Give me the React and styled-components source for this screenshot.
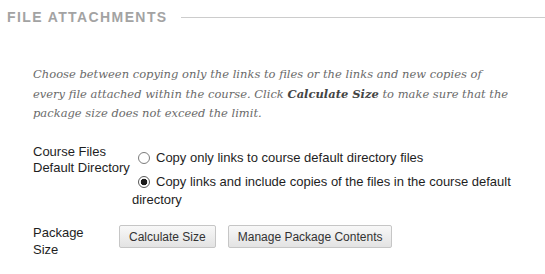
import React from 'react'
import styled, { createGlobalStyle } from 'styled-components'

const GlobalStyle = createGlobalStyle`
  body {
    margin: 0;
    background: #ffffff;
    font-family: "Liberation Sans", Arial, sans-serif;
  }
`

const Page = styled.div`
  width: 545px;
  height: 274px;
  overflow: hidden;
  background: #ffffff;
`

const Header = styled.div`
  display: flex;
  align-items: center;
  padding: 10px 0 0 7px;
  height: 15px;
`

const Title = styled.h2`
  margin: 0;
  font-size: 14px;
  font-weight: bold;
  letter-spacing: 1.4px;
  color: #a3a3a3;
  line-height: 15px;
  white-space: nowrap;
`

const Rule = styled.div`
  flex: 1;
  height: 1px;
  margin-left: 13px;
  background: #cccccc;
`

const Instructions = styled.p`
  margin: 40px 0 0 33px;
  width: 505px;
  font-family: "DejaVu Serif", Georgia, serif;
  font-style: italic;
  font-size: 11.5px;
  line-height: 19.5px;
  color: #6a6a6a;

  b {
    color: #444444;
  }
`

const Row = styled.div`
  display: flex;
  align-items: flex-start;
  margin-top: ${props => props.gap}px;
  padding-left: 33px;
`

const Label = styled.div`
  width: ${props => props.width}px;
  flex-shrink: 0;
  font-size: 13px;
  line-height: 16.5px;
  color: #1e1e1e;
`

const Options = styled.div`
  padding-top: 5px;
  width: 395px;
`

const Option = styled.label`
  display: block;
  font-size: 13px;
  line-height: 17.5px;
  color: #1e1e1e;
  & + & {
    margin-top: 7px;
  }
`

const Radio = styled.input.attrs({ type: 'radio' })`
  appearance: none;
  display: inline-block;
  box-sizing: border-box;
  width: 12px;
  height: 12px;
  margin: 0 6px 0 6px;
  vertical-align: -2px;
  border: 1px solid #7c7c7c;
  border-radius: 50%;
  background: #ffffff;

  &:checked {
    border-color: #5a5a5a;
    background: radial-gradient(circle, #1a1a1a 0 3px, #ffffff 3.6px);
  }
`

const Buttons = styled.div`
  display: flex;
  gap: 12px;
`

const Button = styled.button`
  height: 23px;
  padding: 0 9px;
  font-family: "Liberation Sans", Arial, sans-serif;
  font-size: 12px;
  color: #333333;
  background: linear-gradient(#f8f8f8, #e3e3e3);
  border: 1px solid #c6c6c6;
  border-radius: 2px;
`

const App = () => {
  return (
    <Page>
      <GlobalStyle />
      <Header>
        <Title>FILE ATTACHMENTS</Title>
        <Rule />
      </Header>
      <Instructions>
        Choose between copying only the links to files or the links and new copies of<br />
        every file attached within the course. Click <b>Calculate Size</b> to make sure that the<br />
        package size does not exceed the limit.
      </Instructions>
      <Row gap={20}>
        <Label width={99}>Course Files Default Directory</Label>
        <Options>
          <Option>
            <Radio name="dir" />
            Copy only links to course default directory files
          </Option>
          <Option>
            <Radio name="dir" defaultChecked />
            Copy links and include copies of the files in the course default directory
          </Option>
        </Options>
      </Row>
      <Row gap={17}>
        <Label width={86}>Package<br />Size</Label>
        <Buttons>
          <Button>Calculate Size</Button>
          <Button>Manage Package Contents</Button>
        </Buttons>
      </Row>
    </Page>
  )
}

export default App
